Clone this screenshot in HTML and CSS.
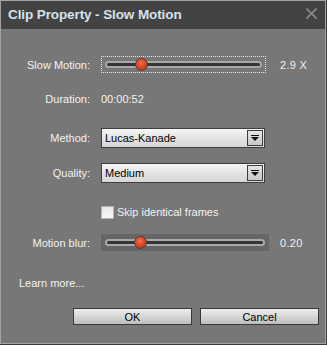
FILE: index.html
```html
<!DOCTYPE html>
<html>
<head>
<meta charset="utf-8">
<link rel="stylesheet" href="styles.css">
</head>
<body>
<div class="window">
  <div class="titlebar">
    <span class="title">Clip Property - Slow Motion</span>
    <svg class="close" width="11" height="11" viewBox="0 0 11 11"><path d="M0.5 0.5 L10.5 10.5 M10.5 0.5 L0.5 10.5" stroke="#8a8a8a" stroke-width="1.6" fill="none"/></svg>
  </div>
  <div class="content">
    <div class="row r1">
      <span class="label">Slow Motion:</span>
      <div class="cell">
        <div class="slider focus w1">
          <div class="track"></div>
          <div class="thumb" style="left:33px"></div>
        </div>
      </div>
      <span class="value">2.9 X</span>
    </div>
    <div class="row r2">
      <span class="label">Duration:</span>
      <div class="cell"><span class="text">00:00:52</span></div>
    </div>
    <div class="row r3">
      <span class="label">Method:</span>
      <div class="cell">
        <div class="combo"><span class="combo-text">Lucas-Kanade</span><span class="drop"><span class="arrow"></span></span></div>
      </div>
    </div>
    <div class="row r4">
      <span class="label">Quality:</span>
      <div class="cell">
        <div class="combo"><span class="combo-text">Medium</span><span class="drop"><span class="arrow"></span></span></div>
      </div>
    </div>
    <div class="row r5">
      <span class="label"></span>
      <div class="cell check-cell"><span class="checkbox"></span><span class="text">Skip identical frames</span></div>
    </div>
    <div class="row r6">
      <span class="label">Motion blur:</span>
      <div class="cell">
        <div class="slider dark w2">
          <div class="track"></div>
          <div class="thumb" style="left:33px"></div>
        </div>
      </div>
      <span class="value">0.20</span>
    </div>
    <div class="learn">Learn more...</div>
    <div class="buttons">
      <button class="btn">OK</button>
      <button class="btn">Cancel</button>
    </div>
  </div>
</div>
</body>
</html>
```
FILE: styles.css
```css
html, body {
  margin: 0;
  background: #3a3a3a;
}
body {
  font-family: "Liberation Sans", Arial, sans-serif;
  font-size: 11px;
  color: #f2f2f2;
}
.window {
  width: 326px;
  height: 344px;
  box-sizing: border-box;
  border: 1px solid #a2a2a2;
  background: #777777;
  display: flex;
  flex-direction: column;
}
.titlebar {
  height: 28px;
  background: #434343;
  display: flex;
  align-items: center;
  justify-content: space-between;
  padding: 0 8px 0 7px;
  flex: none;
}
.title {
  font-weight: bold;
  font-size: 13.5px;
  color: #d6e2ec;
  letter-spacing: -0.1px;
  margin-top: -1px;
}
.close {
  display: block;
  margin-top: -3px;
}
.content {
  display: flex;
  flex-direction: column;
  flex: 1;
}
.row {
  display: grid;
  grid-template-columns: 89px 168px auto;
  column-gap: 11px;
  align-items: center;
  height: 16px;
}
.label {
  text-align: right;
}
.cell {
  display: flex;
  align-items: center;
}
.value {
  letter-spacing: 0.3px;
}
.r1 { margin-top: 27px; height: 17px; }
.r2 { margin-top: 18px; }
.r3 { margin-top: 21px; height: 20px; }
.r4 { margin-top: 15px; height: 20px; }
.r5 { margin-top: 22px; height: 14px; }
.r6 { margin-top: 15px; height: 17px; }

.slider {
  position: relative;
  box-sizing: border-box;
  height: 17px;
  padding: 0 3px;
  display: flex;
  align-items: center;
}
.slider.w1 { width: 165px; }
.slider.w2 { width: 172px; }
.slider.focus { border: 1px dotted #e8e8e8; padding: 0 3px; }
.slider.dark { background: #666666; padding: 0 4px; }
.track {
  flex: 1;
  height: 7px;
  box-sizing: border-box;
  border: 2px solid #a9a9a9;
  border-radius: 4px;
  background: #353535;
}
.thumb {
  position: absolute;
  top: 50%;
  width: 13px;
  height: 13px;
  margin-top: -6.5px;
  box-sizing: border-box;
  border-radius: 50%;
  border: 1px solid #5a3a30;
  background: radial-gradient(circle at 45% 35%, #f07050 0%, #d84a28 45%, #a8301a 100%);
}

.text { white-space: nowrap; }

.combo {
  width: 164px;
  height: 20px;
  box-sizing: border-box;
  border: 1px solid #3e3e3e;
  background: linear-gradient(#f6f6f6, #e2e2e2 55%, #d6d6d6);
  display: flex;
  align-items: center;
  justify-content: space-between;
  padding: 0 1px 0 3px;
  color: #000;
}
.combo-text {
  white-space: nowrap;
}
.drop {
  width: 16px;
  height: 16px;
  box-sizing: border-box;
  border: 1px solid #3c3c3c;
  background: linear-gradient(#e4e4e4, #c8c8c8);
  display: flex;
  align-items: center;
  justify-content: center;
}
.arrow {
  width: 0;
  height: 0;
  border-left: 4px solid transparent;
  border-right: 4px solid transparent;
  border-top: 4px solid #111;
  position: relative;
  margin-top: 2px;
}
.arrow::before {
  content: "";
  position: absolute;
  left: -4px;
  top: -6px;
  width: 8px;
  height: 1px;
  background: #111;
}

.check-cell { gap: 3px; }
.checkbox {
  width: 13px;
  height: 13px;
  box-sizing: border-box;
  border: 1px solid #b4b4b4;
  background: linear-gradient(#e8e8e8, #f8f8f8);
  flex: none;
}

.learn {
  margin-top: 24px;
  padding-left: 18px;
  height: 16px;
  line-height: 16px;
}
.buttons {
  margin-top: 17px;
  display: flex;
  justify-content: flex-end;
  gap: 8px;
  padding-right: 6px;
}
.btn {
  width: 119px;
  height: 17px;
  box-sizing: border-box;
  border: 1px solid #3a3a3a;
  background: linear-gradient(#ececec, #d8d8d8 50%, #bdbdbd);
  font-family: "Liberation Sans", Arial, sans-serif;
  font-size: 11px;
  color: #000;
  padding: 0;
  margin: 0;
  border-radius: 0;
}
```
